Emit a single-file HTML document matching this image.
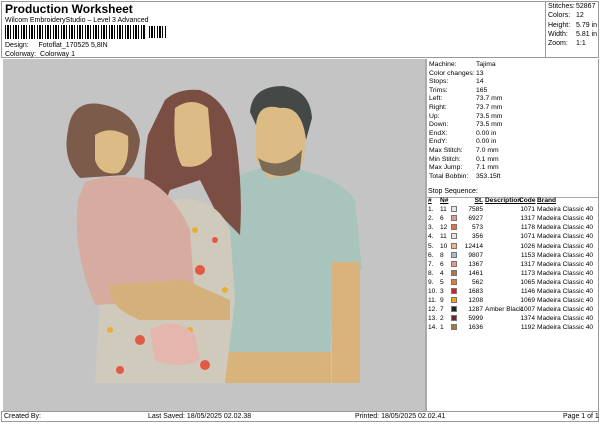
<!DOCTYPE html>
<html><head><meta charset="utf-8"><style>
*{margin:0;padding:0;box-sizing:border-box}
body{width:600px;height:424px;background:#fff;font-family:"Liberation Sans",Arial,sans-serif;color:#000;position:relative;overflow:hidden;font-size:7px}
.a{position:absolute;white-space:nowrap}
.bc{position:absolute;left:5px;top:25px;height:14px;width:140px;background:repeating-linear-gradient(90deg,#000 0 1px,#fff 1px 2px,#000 2px 4px,#fff 4px 5px,#000 5px 6px,#fff 6px 8px)}
.sw{display:inline-block;width:6px;height:6px;border:1px solid #777;vertical-align:-1px}
table{border-collapse:collapse;font-size:6.6px;table-layout:fixed}
td{padding:0;height:9.1px;line-height:9px;overflow:visible;white-space:nowrap}
</style></head><body>
<div class="a" style="left:1px;top:1px;width:598px;height:57px;border:1px solid #999"></div>
<div class="a" style="left:545px;top:1px;width:1px;height:57px;background:#999"></div>
<div class="a" style="left:5px;top:2px;font-size:12px;font-weight:bold">Production Worksheet</div>
<div class="a" style="left:5px;top:17px">Wilcom EmbroideryStudio – Level 3 Advanced</div>
<div class="bc"></div><div class="bc" style="left:149px;width:17px;top:26px;height:12px"></div>
<div class="a" style="left:5px;top:42px">Design: &nbsp;&nbsp;&nbsp;&nbsp;Fotoflat_170525 5,8IN</div>
<div class="a" style="left:5px;top:51px">Colorway: &nbsp;Colorway 1</div>
<div class="a" style="left:548px;top:2px;line-height:9.3px">Stitches:<br>Colors:<br>Height:<br>Width:<br>Zoom:</div>
<div class="a" style="left:576px;top:2px;line-height:9.3px">52867<br>12<br>5.79 in<br>5.81 in<br>1:1</div>

<div class="a" style="left:3px;top:59px;width:422px;height:352px;background:#c4c4c4"></div>
<div class="a" style="left:425px;top:59px;width:2px;height:352px;background:#aaa"></div>
<div class="a" style="left:598px;top:59px;width:1px;height:352px;background:#999"></div>
<div class="a" style="left:427px;top:197px;width:171px;height:1px;background:#aaa"></div>
<svg class="a" style="left:0;top:0" width="600" height="424">
<path d="M223 188 Q240 172 262 168 L300 170 Q340 178 355 200 L362 270 L335 268 L330 355 L223 355 Z" fill="#a9c4bc"/>
<rect x="332" y="262" width="28" height="121" fill="#d9b27c"/>
<rect x="223" y="352" width="108" height="31" fill="#d8b47c"/>
<path d="M256 110 Q262 92 285 94 Q306 100 306 125 L304 160 L292 176 L268 178 L256 160 Z" fill="#dcbb84"/>
<path d="M250 112 Q252 86 283 86 Q310 90 312 118 L306 140 Q302 105 280 108 Q258 102 256 125 Z" fill="#444846"/>
<path d="M258 158 Q280 172 302 150 L300 170 Q280 182 262 170 Z" fill="#7b6a55"/>
<path d="M165 100 Q178 88 200 90 Q228 100 236 140 Q243 190 240 235 L215 210 L200 180 L170 190 L150 240 Q140 180 148 135 Z" fill="#7a4e42"/>
<path d="M175 108 Q192 96 208 108 L212 155 Q200 170 182 166 Q172 150 175 108 Z" fill="#dcbb84"/>
<path d="M150 215 Q170 195 195 200 Q220 205 230 230 L235 300 L225 383 L95 383 L100 300 Q120 240 150 215 Z" fill="#cfcabb"/>
<g fill="#e05a45"><circle cx="180" cy="225" r="4"/><circle cx="200" cy="270" r="5"/><circle cx="140" cy="340" r="5"/><circle cx="205" cy="365" r="5"/><circle cx="120" cy="370" r="4"/><circle cx="215" cy="240" r="3"/></g>
<g fill="#e8b030"><circle cx="195" cy="230" r="3"/><circle cx="170" cy="280" r="3"/><circle cx="110" cy="330" r="3"/><circle cx="190" cy="330" r="3"/><circle cx="225" cy="290" r="3"/></g>
<path d="M68 130 Q72 100 100 104 Q135 110 140 140 Q138 165 125 175 L80 178 Q62 160 68 130 Z" fill="#7d5b4a"/>
<path d="M95 135 Q110 125 128 136 Q130 165 118 173 Q100 176 95 160 Z" fill="#dcbb84"/>
<path d="M85 182 Q115 172 148 180 Q175 195 190 230 L195 300 L95 305 Q72 250 78 200 Z" fill="#d7aca0"/>
<path d="M110 285 L185 280 L230 300 L230 320 L140 320 Q115 310 110 295 Z" fill="#d4b07a"/>
<path d="M150 330 Q175 315 195 335 L200 360 Q180 370 155 360 Z" fill="#e4b6ae"/>
</svg>

<div class="a" style="left:429px;top:61px;line-height:8.6px;font-size:6.8px">Machine:<br>Color changes:<br>Stops:<br>Trims:<br>Left:<br>Right:<br>Up:<br>Down:<br>EndX:<br>EndY:<br>Max Stitch:<br>Min Stitch:<br>Max Jump:<br>Total Bobbin:</div>
<div class="a" style="left:476px;top:61px;line-height:8.6px;font-size:6.8px">Tajima<br>13<br>14<br>165<br>73.7 mm<br>73.7 mm<br>73.5 mm<br>73.5 mm<br>0.00 in<br>0.00 in<br>7.0 mm<br>0.1 mm<br>7.1 mm<br>353.15ft</div>
<div class="a" style="left:428px;top:188px">Stop Sequence:</div>
<table class="a" style="left:428px;top:196px;width:168px">
<colgroup><col style="width:12px"><col style="width:11px"><col style="width:10px"><col style="width:22px"><col style="width:36px"><col style="width:16px"><col style="width:61px"></colgroup>
<tr style="font-weight:bold;text-decoration:underline"><td>#</td><td>N#</td><td></td><td style="text-align:right">St.</td><td style="padding-left:2px">Description</td><td style="text-align:right">Code</td><td style="padding-left:2px">Brand</td></tr>
<tr><td>1.</td><td>11</td><td><span class="sw" style="background:#e9e4dc"></span></td><td align="right">7585</td><td></td><td align="right">1071</td><td style="padding-left:2px">Madeira Classic 40</td></tr>
<tr><td>2.</td><td>6</td><td><span class="sw" style="background:#e49a94"></span></td><td align="right">6927</td><td></td><td align="right">1317</td><td style="padding-left:2px">Madeira Classic 40</td></tr>
<tr><td>3.</td><td>12</td><td><span class="sw" style="background:#ea6a4a"></span></td><td align="right">573</td><td></td><td align="right">1178</td><td style="padding-left:2px">Madeira Classic 40</td></tr>
<tr><td>4.</td><td>11</td><td><span class="sw" style="background:#e9e4dc"></span></td><td align="right">356</td><td></td><td align="right">1071</td><td style="padding-left:2px">Madeira Classic 40</td></tr>
<tr><td>5.</td><td>10</td><td><span class="sw" style="background:#f2b488"></span></td><td align="right">12414</td><td></td><td align="right">1026</td><td style="padding-left:2px">Madeira Classic 40</td></tr>
<tr><td>6.</td><td>8</td><td><span class="sw" style="background:#a8bcc8"></span></td><td align="right">9807</td><td></td><td align="right">1153</td><td style="padding-left:2px">Madeira Classic 40</td></tr>
<tr><td>7.</td><td>6</td><td><span class="sw" style="background:#e49a94"></span></td><td align="right">1367</td><td></td><td align="right">1317</td><td style="padding-left:2px">Madeira Classic 40</td></tr>
<tr><td>8.</td><td>4</td><td><span class="sw" style="background:#b07848"></span></td><td align="right">1461</td><td></td><td align="right">1173</td><td style="padding-left:2px">Madeira Classic 40</td></tr>
<tr><td>9.</td><td>5</td><td><span class="sw" style="background:#e8782a"></span></td><td align="right">562</td><td></td><td align="right">1065</td><td style="padding-left:2px">Madeira Classic 40</td></tr>
<tr><td>10.</td><td>3</td><td><span class="sw" style="background:#d81e22"></span></td><td align="right">1683</td><td></td><td align="right">1146</td><td style="padding-left:2px">Madeira Classic 40</td></tr>
<tr><td>11.</td><td>9</td><td><span class="sw" style="background:#f0a818"></span></td><td align="right">1208</td><td></td><td align="right">1069</td><td style="padding-left:2px">Madeira Classic 40</td></tr>
<tr><td>12.</td><td>7</td><td><span class="sw" style="background:#222"></span></td><td align="right">1287</td><td style="padding-left:2px">Amber Black</td><td align="right">1007</td><td style="padding-left:2px">Madeira Classic 40</td></tr>
<tr><td>13.</td><td>2</td><td><span class="sw" style="background:#6a2830"></span></td><td align="right">5999</td><td></td><td align="right">1374</td><td style="padding-left:2px">Madeira Classic 40</td></tr>
<tr><td>14.</td><td>1</td><td><span class="sw" style="background:#a8783c"></span></td><td align="right">1636</td><td></td><td align="right">1192</td><td style="padding-left:2px">Madeira Classic 40</td></tr>
</table>

<div class="a" style="left:1px;top:411px;width:598px;height:11px;border:1px solid #999"></div>
<div class="a" style="left:4px;top:413px">Created By:</div>
<div class="a" style="left:148px;top:413px">Last Saved: 18/05/2025 02.02.38</div>
<div class="a" style="left:355px;top:413px">Printed: 18/05/2025 02.02.41</div>
<div class="a" style="left:563px;top:413px">Page 1 of 1</div>
</body></html>
